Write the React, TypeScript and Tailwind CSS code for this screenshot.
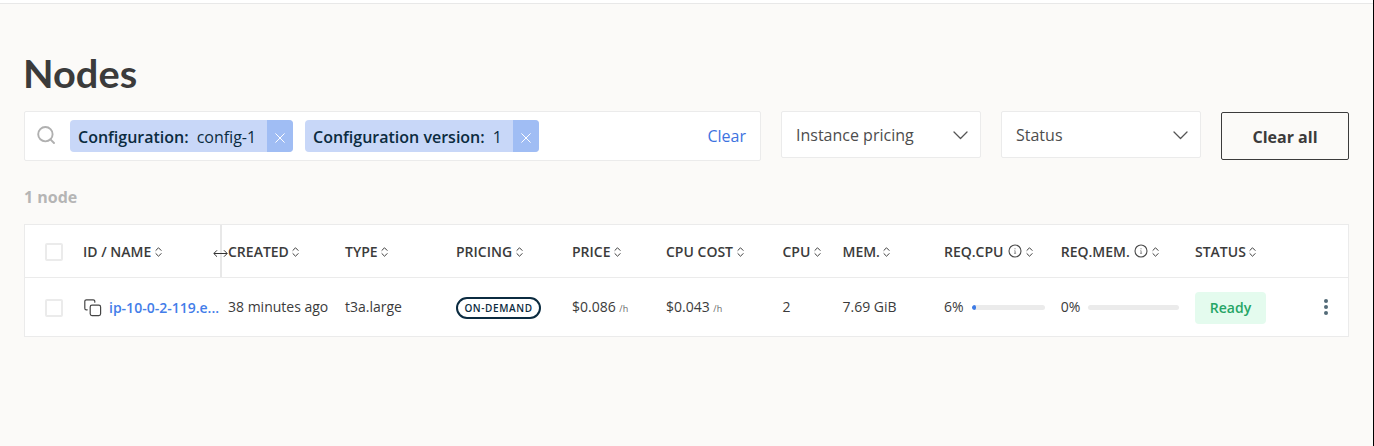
import type { ReactNode } from "react";

function SortIcon() {
  return (
    <svg width="7" height="10" viewBox="0 0 7 10" fill="none" stroke="#3b3b3b" strokeWidth="1" strokeLinecap="round" strokeLinejoin="round" className="mt-[2px] shrink-0">
      <path d="M.9 3.4 3.5.8l2.6 2.6M.9 6.6l2.6 2.6 2.6-2.6" />
    </svg>
  );
}

function InfoIcon() {
  return (
    <svg width="14" height="14" viewBox="0 0 14 14" fill="none" stroke="#4a4a4a" className="mr-[0.5px] ml-[0.5px] shrink-0">
      <circle cx="7" cy="7" r="6" strokeWidth="1.1" />
      <path d="M6.4 6.7H7.1V9.2M6 9.3h2.1" strokeWidth=".6" />
      <circle cx="7" cy="4.8" r=".5" fill="#4a4a4a" stroke="none" />
    </svg>
  );
}

function Chip({ label, value, width }: { label: string; value: string; width: string }) {
  return (
    <div className={`flex h-8 shrink-0 overflow-hidden rounded bg-[#c8d7f8] text-[16px] leading-8 text-[#0b2b40] ${width}`}>
      <span className="flex flex-1 items-center whitespace-nowrap pt-[2px] pl-2">
        <span className="font-semibold">{label}</span>
        <span className="ml-[8px]">{value}</span>
      </span>
      <span className="flex w-[26px] items-center justify-center bg-[#a0bdf4] pt-[4px]">
        <svg width="10" height="10" viewBox="0 0 10 10" stroke="white" strokeWidth="1" strokeLinecap="round">
          <path d="M.7.7l8.6 8.6M9.3.7.7 9.3" />
        </svg>
      </span>
    </div>
  );
}

function Select({ label }: { label: string }) {
  return (
    <div className="flex h-[47px] w-[200px] shrink-0 items-center justify-between rounded-[2px] border border-[#ebebeb] bg-white pr-[12px] pl-[14px] text-[16px] text-[#4d4d4d]">
      <span>{label}</span>
      <svg width="15" height="9" viewBox="0 0 15 9" fill="none" stroke="#555" strokeWidth="1.3" strokeLinecap="round" strokeLinejoin="round" className="mt-[2px]">
        <path d="M1 1l6.5 6.5L14 1" />
      </svg>
    </div>
  );
}

function Checkbox() {
  return <span className="block size-[18px] rounded-[2px] border-2 border-[#ebebeb] bg-white" />;
}

function Heading({ children, info }: { children: ReactNode; info?: boolean }) {
  return (
    <div className="flex items-center gap-[3.5px] whitespace-nowrap">
      <span>{children}</span>
      {info && <InfoIcon />}
      <SortIcon />
    </div>
  );
}

function Money({ amount }: { amount: string }) {
  return (
    <div className="pb-[2px] whitespace-nowrap">
      {amount} <span className="text-[9px] text-[#6b6b6b]">/h</span>
    </div>
  );
}

function Usage({ label, percent, width }: { label: string; percent: number; width: string }) {
  return (
    <div className="flex items-center gap-2 pb-[2px]">
      <span>{label}</span>
      <span className={`mt-[3px] h-[5px] overflow-hidden rounded-full bg-[#ebebeb] ${width}`}>
        {percent > 0 && <span className="block h-full rounded-full bg-[#3d7be6]" style={{ width: `${percent}%` }} />}
      </span>
    </div>
  );
}

const columns =
  "grid grid-cols-[58px_145px_117px_111px_116px_94px_116.5px_60px_101.5px_116.7px_134.3px_1fr] items-center";

export default function App() {
  return (
    <div className="h-[446px] w-[1374px] overflow-hidden border-r border-black bg-[#fbfaf8] font-['Open_Sans',sans-serif] text-[#3b3b3b]">
      <div className="h-1 border-b border-[#e8e8e8] bg-white" />
      <main className="pr-6 pl-6">
        <h1 className="-ml-px w-fit origin-left scale-x-[1.06] pt-[47px] pb-px font-['Lato',sans-serif] text-[37.5px] leading-[46px] font-bold">Nodes</h1>
        <div className="mt-[13px] flex h-[50px] items-start gap-5">
          <div className="flex h-[50px] w-[737px] shrink-0 items-center rounded-[2px] border border-[#ebebeb] bg-white pr-[14px] pl-[12px]">
            <svg width="18" height="18" viewBox="0 0 18 18" fill="none" stroke="#b0b0b0" strokeWidth="1.9" strokeLinecap="round" className="mr-[15px] mb-[2px] shrink-0">
              <circle cx="8.4" cy="8.2" r="7.2" />
              <path d="M13.4 13.4 17 17" />
            </svg>
            <Chip label="Configuration:" value="config-1" width="w-[223px] mr-3" />
            <Chip label="Configuration version:" value="1" width="w-[234px]" />
            <span className="ml-auto text-[16px] text-[#3d73df]">Clear</span>
          </div>
          <Select label="Instance pricing" />
          <Select label="Status" />
          <button className="mt-px h-12 w-32 shrink-0 rounded-[2px] border border-[#3b3b3b] pt-[2px] text-[16px] font-bold">Clear all</button>
        </div>
        <div className="mt-[24px] text-[16px] leading-6 font-bold text-[#b5b5b5]">1 node</div>
        <div className="mt-[15px] h-[113px] border border-[#ebebeb] bg-white text-[14px]">
          <div className={`relative h-[53px] border-b border-[#ebebeb] font-semibold ${columns}`}>
            <div className="pt-[2px] pl-5"><Checkbox /></div>
            <Heading>ID / NAME</Heading>
            <Heading>CREATED</Heading>
            <Heading>TYPE</Heading>
            <Heading>PRICING</Heading>
            <Heading>PRICE</Heading>
            <Heading>CPU COST</Heading>
            <Heading>CPU</Heading>
            <Heading>MEM.</Heading>
            <Heading info>REQ.CPU</Heading>
            <Heading info>REQ.MEM.</Heading>
            <Heading>STATUS</Heading>
            <span className="absolute top-0 left-[195px] h-[52px] w-[2px] bg-[#e8e8e8]" />
            <svg width="15" height="8" viewBox="0 0 15 8" fill="none" stroke="#333" className="absolute top-[25px] left-[188px]">
              <path d="M1 3.5h13M4 .3.8 3.5 4 6.7M11 .3l3.2 3.2L11 6.7" />
            </svg>
          </div>
          <div className={`h-[58px] ${columns}`}>
            <div className="pt-[2px] pl-5"><Checkbox /></div>
            <div className="flex items-center pt-px">
              <svg width="18" height="18" viewBox="0 0 18 18" fill="none" stroke="#454545" strokeWidth="1.2" strokeLinecap="round" strokeLinejoin="round" className="mr-[7px] ml-px shrink-0">
                <rect x="6.2" y="6.2" width="10.4" height="10.4" rx="1.8" />
                <path d="M3.2 10.8H2.4A1.6 1.6 0 0 1 .8 9.2V2.4A1.6 1.6 0 0 1 2.4.8h6.8a1.6 1.6 0 0 1 1.6 1.6v.8" />
              </svg>
              <span className="font-semibold whitespace-nowrap text-[#437de9]">ip-10-0-2-119.e...</span>
            </div>
            <div className="pb-[2px] whitespace-nowrap">38 minutes ago</div>
            <div className="pb-[2px]">t3a.large</div>
            <div>
              <span className="mt-px flex h-[22px] w-[85px] items-center justify-center rounded-full border-2 border-[#0b2b40] pt-px text-[10px] font-semibold tracking-[0.6px] whitespace-nowrap text-[#0b2b40]">ON-DEMAND</span>
            </div>
            <Money amount="$0.086" />
            <Money amount="$0.043" />
            <div className="pb-[2px]">2</div>
            <div className="pb-[2px]">7.69 GiB</div>
            <Usage label="6%" percent={6} width="w-[73px]" />
            <Usage label="0%" percent={0} width="w-[91px]" />
            <div className="flex items-center justify-between pr-5">
              <span className="mt-[2px] flex h-8 w-[71px] items-center justify-center rounded bg-[#e4fbee] pb-px font-semibold text-[#26a566]">Ready</span>
              <svg width="4" height="16" viewBox="0 0 4 16" fill="#536b78">
                <circle cx="2" cy="2" r="2" />
                <circle cx="2" cy="8" r="2" />
                <circle cx="2" cy="14" r="2" />
              </svg>
            </div>
          </div>
        </div>
      </main>
    </div>
  );
}
